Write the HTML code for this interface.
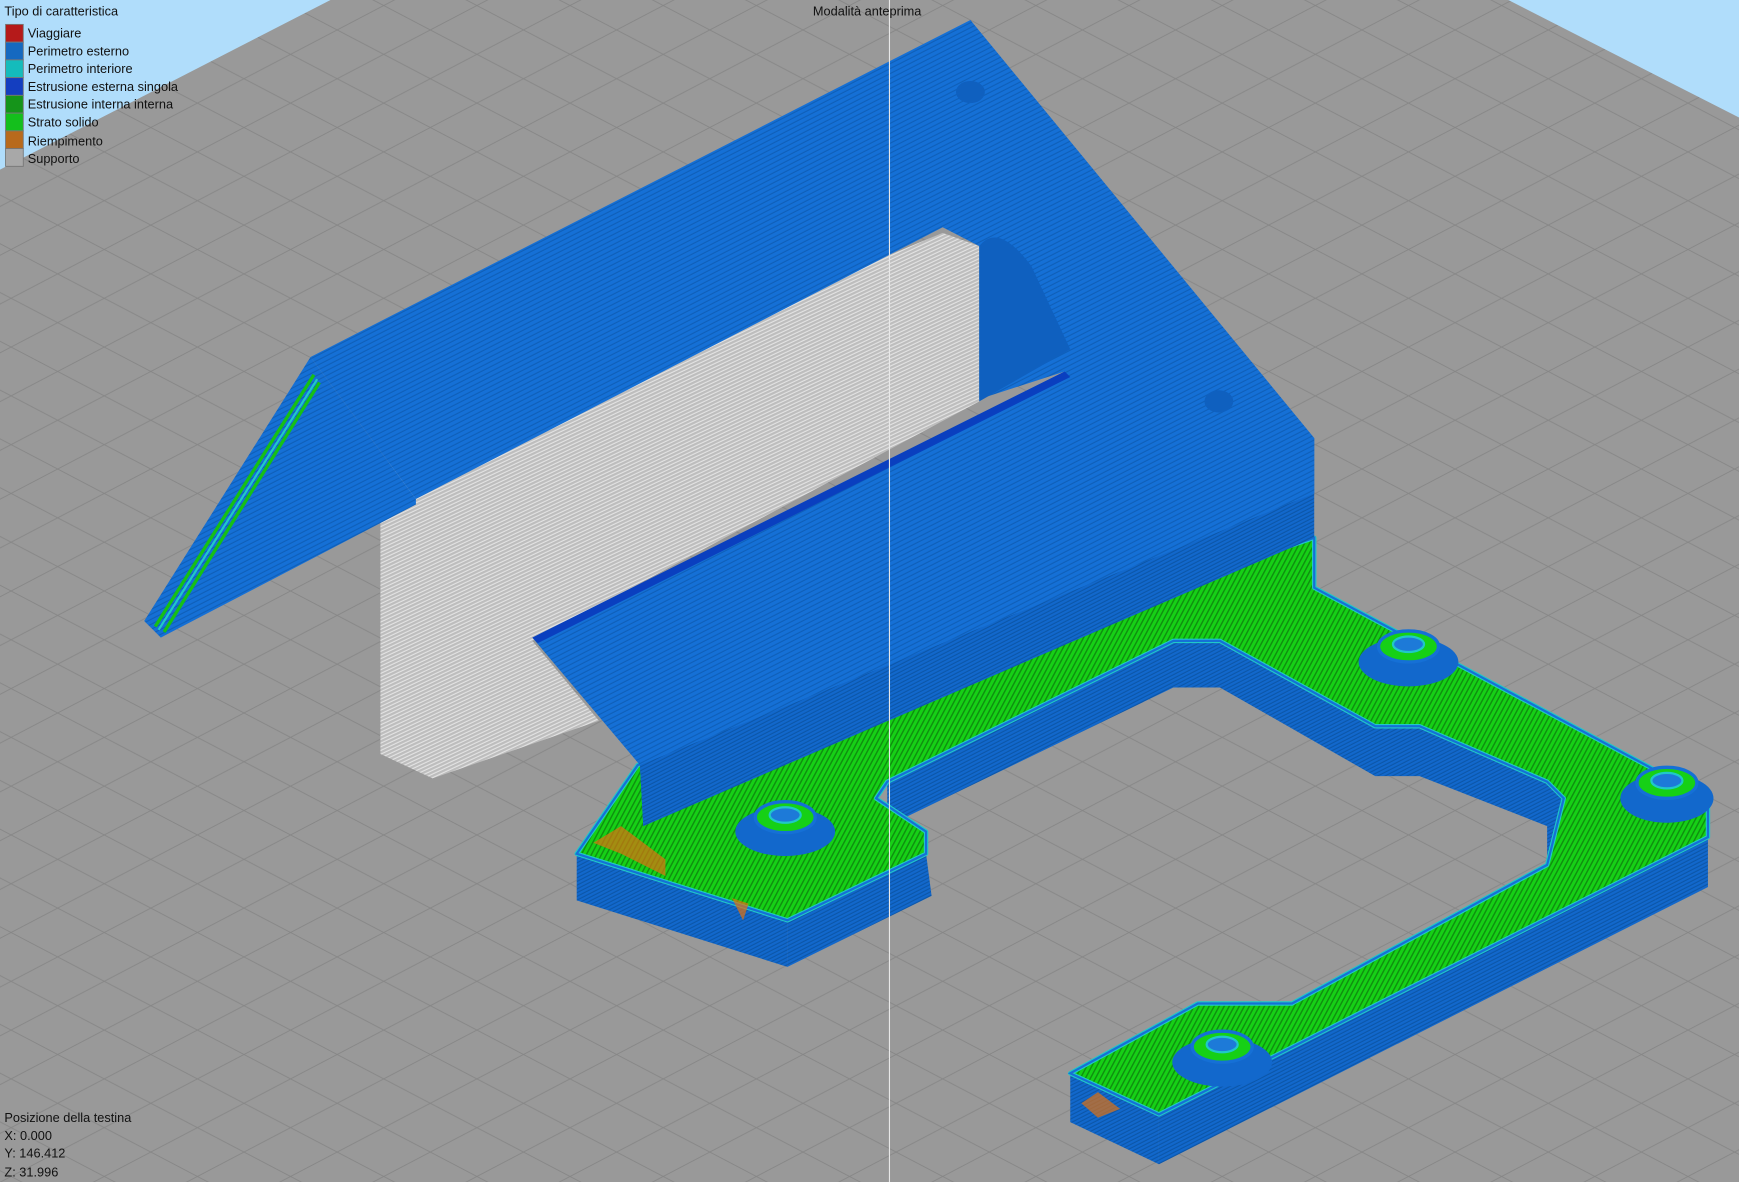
<!DOCTYPE html>
<html><head><meta charset="utf-8"><style>
html,body{margin:0;padding:0;width:1739px;height:1182px;overflow:hidden;background:#999}
svg{display:block}
text{font-family:"Liberation Sans","DejaVu Sans",sans-serif;font-size:11.5px;fill:#111}
</style></head><body>
<svg width="1739" height="1182" viewBox="0 0 1568 1066" preserveAspectRatio="none">
<defs>
<pattern id="grid" width="84" height="44" patternUnits="userSpaceOnUse" patternTransform="translate(10,5)">
<rect width="84" height="44" fill="#999"/>
<path d="M0 0L84 44M0 44L84 0" stroke="#868686" stroke-width="0.8" fill="none"/>
</pattern>
<pattern id="blue" width="8" height="4" patternUnits="userSpaceOnUse" patternTransform="rotate(-27)">
<rect width="8" height="4" fill="#1570d6"/>
<rect y="3" width="8" height="1" fill="#0f5fb8"/>
</pattern>
<pattern id="bluev" width="8" height="3" patternUnits="userSpaceOnUse" patternTransform="rotate(-27)">
<rect width="8" height="3" fill="#1268cc"/>
<rect y="2" width="8" height="1" fill="#0c56a8"/>
</pattern>
<pattern id="green" width="4" height="8" patternUnits="userSpaceOnUse" patternTransform="rotate(28)">
<rect width="4" height="8" fill="#16d016"/>
<rect width="1.3" height="8" fill="#0f8f0f"/>
</pattern>
<pattern id="sup" width="6" height="3" patternUnits="userSpaceOnUse" patternTransform="rotate(-25)">
<rect width="6" height="3" fill="#bdbdbd"/>
<rect y="2" width="6" height="1" fill="#e4e4e4"/>
</pattern>
</defs>
<rect width="1568" height="1066" fill="url(#grid)"/>
<polygon points="0,0 298,0 0,153" fill="#b0ddfb"/>
<polygon points="1360,0 1568,0 1568,106" fill="#b0ddfb"/>

<!-- base plate sides -->
<polygon points="520,770 710,830 710,872 520,812" fill="url(#bluev)"/>
<polygon points="710,830 835,770 840,808 710,872" fill="url(#bluev)"/>
<polygon points="965,968 1045,1005 1045,1050 965,1012" fill="url(#bluev)"/>
<polygon points="1045,1005 1540,755 1540,800 1045,1050" fill="url(#bluev)"/>
<!-- hole walls -->
<polygon points="800,705 1058,578 1100,578 1240,655 1280,655 1395,705 1410,720 1395,780 1395,745 1280,700 1240,700 1100,620 1058,620 800,745" fill="url(#bluev)"/>
<!-- green top face -->
<polygon points="575,690 1185,485 1185,530 1540,720 1540,755 1045,1005 965,968 1080,905 1165,905 1395,780 1410,720 1395,705 1280,655 1240,655 1100,578 1058,578 800,705 790,720 835,750 835,770 710,830 520,770" fill="url(#green)" stroke="#20c8c8" stroke-width="4" stroke-linejoin="round"/>
<polygon points="575,690 1185,485 1185,530 1540,720 1540,755 1045,1005 965,968 1080,905 1165,905 1395,780 1410,720 1395,705 1280,655 1240,655 1100,578 1058,578 800,705 790,720 835,750 835,770 710,830 520,770" fill="none" stroke="#1570d6" stroke-width="2"/>
<polygon points="535,760 560,745 600,775 600,790 560,770" fill="#e07010" opacity="0.7"/>
<polygon points="660,810 675,815 670,830" fill="#e07010" opacity="0.7"/>
<polygon points="975,995 990,985 1010,1000 990,1008" fill="#e07010" opacity="0.7"/>

<!-- support -->
<polygon points="343,420 850,210 883,222 883,362 480,578 540,650 390,702 343,680" fill="url(#sup)"/>
<!-- back roof -->
<polygon points="280,322 875,18 1185,395 1185,445 960,335 883,360 883,222 850,205 375,450" fill="url(#blue)"/>
<path d="M883,222 Q900,200 930,240 L965,315 L883,362" fill="#0f60bf"/>
<!-- left gable -->
<polygon points="130,560 280,322 375,450 375,455 145,575" fill="url(#blue)"/>
<path d="M140,565 L283,338 M148,570 L288,345" stroke="#16c016" stroke-width="3"/>
<path d="M143,568 L286,342" stroke="#20c8c8" stroke-width="2"/>
<!-- front roof panel -->
<polygon points="480,575 960,335 1185,395 1185,445 580,745 577,690" fill="url(#blue)"/>
<polygon points="480,575 960,335 965,340 485,580" fill="#0a3fbf"/>
<polygon points="577,690 1185,445 1185,485 580,745" fill="url(#bluev)"/>

<!-- bosses -->
<g>
<ellipse cx="708" cy="750" rx="45" ry="22" fill="#1268cc"/><ellipse cx="708" cy="737" rx="27" ry="14" fill="#16d016" stroke="#1570d6" stroke-width="3"/><ellipse cx="708" cy="735" rx="14" ry="7" fill="#1d7ad8" stroke="#20c8c8" stroke-width="2"/>
<ellipse cx="1270" cy="597" rx="45" ry="22" fill="#1268cc"/><ellipse cx="1270" cy="583" rx="27" ry="14" fill="#16d016" stroke="#1570d6" stroke-width="3"/><ellipse cx="1270" cy="581" rx="14" ry="7" fill="#1d7ad8" stroke="#20c8c8" stroke-width="2"/>
<ellipse cx="1503" cy="720" rx="42" ry="22" fill="#1268cc"/><ellipse cx="1503" cy="706" rx="27" ry="14" fill="#16d016" stroke="#1570d6" stroke-width="3"/><ellipse cx="1503" cy="704" rx="14" ry="7" fill="#1d7ad8" stroke="#20c8c8" stroke-width="2"/>
<ellipse cx="1102" cy="958" rx="45" ry="22" fill="#1268cc"/><ellipse cx="1102" cy="944" rx="27" ry="14" fill="#16d016" stroke="#1570d6" stroke-width="3"/><ellipse cx="1102" cy="942" rx="14" ry="7" fill="#1d7ad8" stroke="#20c8c8" stroke-width="2"/>
<ellipse cx="875" cy="83" rx="13" ry="10" fill="#0f60bf"/>
<ellipse cx="1099" cy="362" rx="13" ry="10" fill="#0f60bf"/>
</g>

<line x1="802" y1="0" x2="802" y2="1066" stroke="#e8e8e8" stroke-width="1"/>
<text x="733" y="14">Modalità anteprima</text>

<text x="4" y="14">Tipo di caratteristica</text>
<g stroke="#777" stroke-width="0.8">
<rect x="5" y="22" width="16" height="16" fill="#b51a1a"/>
<rect x="5" y="38" width="16" height="16" fill="#1569c0"/>
<rect x="5" y="54" width="16" height="16" fill="#14bcbc"/>
<rect x="5" y="70" width="16" height="16" fill="#143ec0"/>
<rect x="5" y="86" width="16" height="16" fill="#15941a"/>
<rect x="5" y="102" width="16" height="16" fill="#14bf1c"/>
<rect x="5" y="118" width="16" height="16" fill="#b86a1c"/>
<rect x="5" y="134" width="16" height="16" fill="#a8a8a8"/>
</g>
<text x="25" y="34">Viaggiare</text>
<text x="25" y="50">Perimetro esterno</text>
<text x="25" y="66">Perimetro interiore</text>
<text x="25" y="82">Estrusione esterna singola</text>
<text x="25" y="98">Estrusione interna interna</text>
<text x="25" y="114">Strato solido</text>
<text x="25" y="131">Riempimento</text>
<text x="25" y="147">Supporto</text>

<text x="4" y="1012">Posizione della testina</text>
<text x="4" y="1028">X: 0.000</text>
<text x="4" y="1044">Y: 146.412</text>
<text x="4" y="1061">Z: 31.996</text>
</svg>
</body></html>
